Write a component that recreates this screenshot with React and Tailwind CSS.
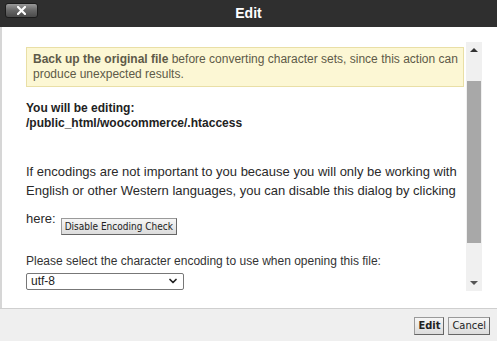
import { ChevronDown } from "lucide-react";

const sans = { fontFamily: '"Liberation Sans", Arial, sans-serif' };

const Scrollbar = () => (
    <div className="w-[16px] mt-[15px] mb-[17px] mr-[15px] bg-[#f0f0f0] flex flex-col items-center">
        <div className="h-[16px] flex items-center justify-center">
            <div className="w-0 h-0 border-l-[4px] border-r-[4px] border-b-[4px] border-l-transparent border-r-transparent border-b-[#333]" />
        </div>
        <div className="mt-[23px] w-[14px] h-[162px] bg-[#a8a8a8]" />
        <div className="flex-1" />
        <div className="h-[16px] flex items-center justify-center">
            <div className="w-0 h-0 border-l-[4px] border-r-[4px] border-t-[4px] border-l-transparent border-r-transparent border-t-[#555]" />
        </div>
    </div>
);

const LegacyButton = ({ children, bold, small }) => (
    <button
        className={`px-[3px] leading-[15px] text-[#222] border border-[#9a9a9a] border-r-[#666] border-b-[#666] bg-gradient-to-b from-[#f6f6f6] to-[#dcdcdc] ${small ? "h-[17px] text-[10px]" : "h-[18px] text-[11px]"} ${bold ? "font-bold" : ""}`}
        style={{ fontFamily: '"DejaVu Sans Condensed", "DejaVu Sans", Tahoma, sans-serif' }}
    >
        {children}
    </button>
);

export default function App() {
    return (
        <div className="w-[497px] h-[341px] flex flex-col bg-white overflow-hidden" style={sans}>
            <div className="h-[27px] bg-[#2f2f2f] relative flex items-center justify-center shrink-0">
                <button className="absolute left-[5px] top-[3px] w-[33px] h-[15px] rounded-[3px] border border-[#1c1c1c] bg-gradient-to-b from-[#9a9a9a] via-[#666] to-[#4a4a4a] flex items-center justify-center">
                    <svg width="9" height="9" viewBox="0 0 9 9">
                        <path d="M1 1 L8 8 M8 1 L1 8" stroke="#fff" strokeWidth="2.2" strokeLinecap="square" />
                    </svg>
                </button>
                <span className="text-white font-bold text-[14px]">Edit</span>
            </div>

            <div className="flex-1 flex border-l-2 border-[#d6d6d6]">
                <div className="flex-1 pl-[24px] pr-[2px] pt-[20px] text-[12px] text-[#333]">
                    <div className="bg-[#fcf7d4] border border-[#e9dfa6] pl-[6px] pr-[1px] py-[4px] leading-[15px] text-[#5e5a48]">
                        <b>Back up the original file</b> before converting character sets, since this action can produce unexpected results.
                    </div>
                    <div className="mt-[14px] font-bold leading-[15px] text-[#222]">
                        <div>You will be editing:</div>
                        <div>/public_html/woocommerce/.htaccess</div>
                    </div>
                    <p className="mt-[31px] text-[13px] leading-[19px] text-[#2a2a2a]">
                        If encodings are not important to you because you will only be working with English or other Western languages, you can disable this dialog by clicking
                    </p>
                    <div className="mt-[9px] flex items-start gap-[5px] text-[13px] text-[#2a2a2a]">
                        <span className="leading-[19px]">here:</span>
                        <div className="mt-[7px]">
                            <LegacyButton small>Disable Encoding Check</LegacyButton>
                        </div>
                    </div>
                    <div className="mt-[18px] leading-[15px] text-[#333]">
                        Please select the character encoding to use when opening this file:
                    </div>
                    <div className="mt-[4px] w-[158px] h-[17px] border border-[#777] rounded-[2px] flex items-center justify-between px-[4px] text-[#222]">
                        <span>utf-8</span>
                        <ChevronDown size={12} strokeWidth={3.5} color="#222" />
                    </div>
                </div>
                <Scrollbar />
            </div>

            <div className="h-[33px] shrink-0 bg-[#efefef] border-t border-[#cfcfcf] flex items-center justify-end gap-[4px] pr-[7px] pt-[1px]">
                <LegacyButton bold>Edit</LegacyButton>
                <LegacyButton>Cancel</LegacyButton>
            </div>
        </div>
    );
}
